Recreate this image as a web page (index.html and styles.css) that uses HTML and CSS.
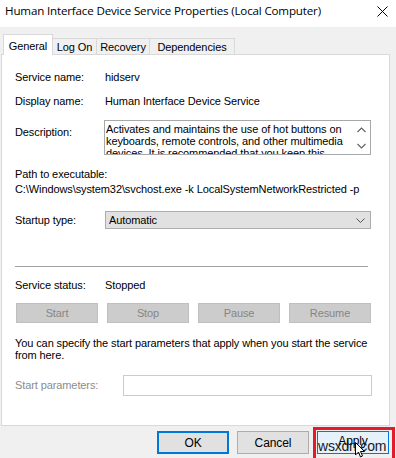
FILE: index.html
```html
<!DOCTYPE html>
<html>
<head>
<meta charset="utf-8">
<link rel="stylesheet" href="styles.css">
</head>
<body>
<div class="titlebar">
  <span class="title">Human Interface Device Service Properties (Local Computer)</span>
  <svg class="close" width="11" height="11" viewBox="0 0 11 11"><path d="M0.5 0.5 L10.5 10.5 M10.5 0.5 L0.5 10.5" stroke="#000" stroke-width="1" fill="none"/></svg>
</div>
<div class="tabs">
  <div class="tab active t-general">General</div>
  <div class="tab t-logon">Log On</div>
  <div class="tab t-recovery">Recovery</div>
  <div class="tab t-deps">Dependencies</div>
</div>
<div class="panel">
  <div class="row r-name"><span class="label">Service name:</span><span>hidserv</span></div>
  <div class="row r-display"><span class="label">Display name:</span><span>Human Interface Device Service</span></div>
  <div class="row r-desc">
    <span class="label desc-label">Description:</span>
    <div class="descbox">
      <div class="desctext">
        <div>Activates and maintains the use of hot buttons on</div>
        <div>keyboards, remote controls, and other multimedia</div>
        <div>devices. It is recommended that you keep this</div>
      </div>
      <div class="scroll">
        <svg width="9" height="6" viewBox="0 0 9 6"><path d="M0.5 5 L4.5 1 L8.5 5" stroke="#606060" stroke-width="1.1" fill="none"/></svg>
        <svg width="9" height="6" viewBox="0 0 9 6"><path d="M0.5 1 L4.5 5 L8.5 1" stroke="#606060" stroke-width="1.1" fill="none"/></svg>
      </div>
    </div>
  </div>
  <div class="path-label">Path to executable:</div>
  <div class="path-value">C:\Windows\system32\svchost.exe -k LocalSystemNetworkRestricted -p</div>
  <div class="row r-startup">
    <span class="label">Startup type:</span>
    <div class="select"><span>Automatic</span>
      <svg width="9" height="5" viewBox="0 0 9 5"><path d="M0.5 0.5 L4.5 4.5 L8.5 0.5" stroke="#444" stroke-width="0.9" fill="none"/></svg>
    </div>
  </div>
  <div class="sep"></div>
  <div class="row r-status"><span class="label">Service status:</span><span>Stopped</span></div>
  <div class="svc-buttons">
    <div class="dbtn">Start</div>
    <div class="dbtn">Stop</div>
    <div class="dbtn">Pause</div>
    <div class="dbtn">Resume</div>
  </div>
  <p class="hint">You can specify the start parameters that apply when you start the service<br>from here.</p>
  <div class="row r-params"><span class="label plabel">Start parameters:</span><div class="pinput"></div></div>
</div>
<div class="footer">
  <div class="btn ok">OK</div>
  <div class="btn">Cancel</div>
  <div class="apply-wrap">
    <div class="btn apply">Apply</div>
    <span class="watermark">wsxdn.com</span>
    <svg class="cursor" width="10" height="16" viewBox="0 0 10 16"><path d="M0.5 0.5 L0.5 13 L3.5 10 L5.5 15 L7.5 14 L5.5 9.5 L9.5 9.5 Z" fill="#fff" stroke="#000" stroke-width="1"/></svg>
  </div>
</div>
</body>
</html>
```
FILE: styles.css
```css
html, body {
  margin: 0;
  padding: 0;
}
body {
  width: 396px;
  height: 458px;
  overflow: hidden;
  background: #f0f0f0;
  font-family: "Liberation Sans", Arial, sans-serif;
  font-size: 11px;
  letter-spacing: -0.1px;
  color: #000;
}
.titlebar {
  height: 27px;
  background: #fff;
  display: flex;
  align-items: flex-start;
  justify-content: space-between;
  box-sizing: border-box;
  padding: 3px 8px 0 5px;
}
.title {
  font-family: "Segoe UI", "Open Sans", sans-serif;
  font-size: 11.6px;
  line-height: 16px;
  letter-spacing: -0.17px;
}
.close {
  margin-top: 3px;
}
.tabs {
  display: flex;
  align-items: flex-end;
  padding-left: 3px;
  margin-top: 6px;
  height: 21px;
  position: relative;
  z-index: 2;
}
.tab {
  height: 16px;
  box-sizing: border-box;
  border: 1px solid #d9d9d9;
  border-bottom: none;
  border-left: none;
  background: #f0f0f0;
  padding-top: 1px;
  line-height: 15px;
  text-align: center;
  white-space: nowrap;
}
.t-general { width: 50px; }
.t-logon { width: 44px; }
.t-recovery { width: 53px; }
.t-deps { width: 85px; }
.tab.active {
  height: 21px;
  border-left: 1px solid #d9d9d9;
  background: #fff;
  padding-top: 4px;
  margin-bottom: -1px;
  line-height: 14px;
}
.panel {
  margin-left: 1px;
  width: 389px;
  height: 372px;
  box-sizing: border-box;
  background: #fff;
  border: 1px solid #d9d9d9;
  padding: 16px 0 0 13px;
  position: relative;
  z-index: 1;
}
.row {
  display: flex;
  align-items: center;
  line-height: 13px;
}
.label {
  width: 90px;
  flex: none;
}
.r-display {
  margin-top: 11px;
}
.r-desc {
  margin-top: 12px;
  align-items: flex-start;
}
.desc-label {
  padding-top: 6px;
}
.descbox {
  width: 267px;
  height: 35px;
  box-sizing: border-box;
  border: 1px solid #a8a8a8;
  margin-left: -1px;
  display: flex;
  overflow: hidden;
}
.desctext {
  flex: 1;
  padding: 2px 0 0 1px;
  line-height: 12px;
  white-space: nowrap;
  overflow: hidden;
}
.scroll {
  width: 17px;
  display: flex;
  flex-direction: column;
  align-items: center;
  justify-content: space-between;
  padding: 6px 0 5px;
  box-sizing: border-box;
}
.path-label {
  margin-top: 13px;
  line-height: 13px;
}
.path-value {
  margin-top: 2px;
  line-height: 13px;
  white-space: nowrap;
}
.r-startup {
  margin-top: 15px;
}
.select {
  width: 266px;
  height: 18px;
  box-sizing: border-box;
  background: #e1e1e1;
  border: 1px solid #adadad;
  display: flex;
  align-items: center;
  justify-content: space-between;
  padding: 0 5px 0 3px;
}
.sep {
  margin-top: 37px;
  width: 353px;
  height: 1px;
  background: #a0a0a0;
}
.r-status {
  margin-top: 12px;
}
.svc-buttons {
  margin-top: 11px;
  margin-left: 1px;
  width: 355px;
  display: grid;
  grid-template-columns: repeat(4, 1fr);
  column-gap: 9px;
}
.dbtn {
  height: 20px;
  box-sizing: border-box;
  background: #cccccc;
  border: 1px solid #bfbfbf;
  color: #868686;
  display: flex;
  align-items: center;
  justify-content: center;
}
.hint {
  margin: 15px 0 0;
  line-height: 11.5px;
}
.r-params {
  margin-top: 14px;
}
.plabel {
  width: 108px;
  color: #8c8c8c;
}
.pinput {
  width: 249px;
  height: 21px;
  box-sizing: border-box;
  border: 1px solid #cccccc;
  background: #fff;
}
.footer {
  display: flex;
  padding: 5px 0 0 157px;
  gap: 8px;
}
.btn {
  width: 72px;
  height: 23px;
  box-sizing: border-box;
  background: #e1e1e1;
  border: 1px solid #adadad;
  display: flex;
  align-items: center;
  justify-content: center;
  font-size: 12px;
  font-family: "Liberation Sans", Arial, sans-serif;
}
.btn.ok {
  border: 2px solid #0078d7;
}
.apply-wrap {
  position: relative;
  width: 72px;
  height: 23px;
}
.apply-wrap::before {
  content: "";
  position: absolute;
  left: -4px;
  top: -4px;
  width: 82px;
  height: 40px;
  box-sizing: border-box;
  border: 3px solid #e21c2b;
}
.btn.apply {
  background: #e5f1fb;
  border: 1px solid #0078d7;
  padding-bottom: 4px;
}
.watermark {
  position: absolute;
  left: 1px;
  top: 7px;
  font-family: "Liberation Sans", Arial, sans-serif;
  font-size: 14px;
  color: #1a1a1a;
  letter-spacing: -0.2px;
}
.cursor {
  position: absolute;
  left: 38px;
  top: 11px;
}
```
